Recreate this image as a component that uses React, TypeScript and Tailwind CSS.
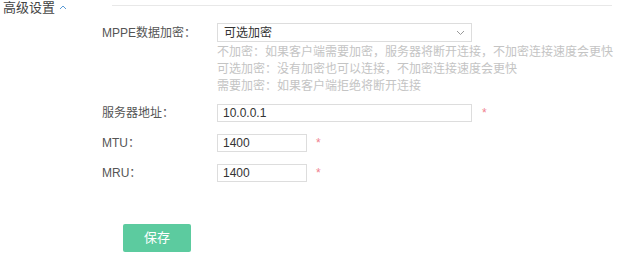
import React from "react";

const font = { fontFamily: '"Liberation Sans", "Noto Sans CJK SC", sans-serif' };

function Row({ label, children, className = "" }: { label: string; children: React.ReactNode; className?: string }) {
  return (
    <div className={`flex items-center ${className}`}>
      <div className="w-[115px] shrink-0 text-[12px] text-[#555]">{label}</div>
      {children}
    </div>
  );
}

function Star({ className = "" }: { className?: string }) {
  return <span className={`text-[12px] text-[#f07f8f] ${className}`}>*</span>;
}

export default function App() {
  return (
    <div className="relative h-[253px] w-[617px] overflow-hidden bg-white" style={font}>
      <div className="flex items-start pl-[3px] pr-[5px] pt-[1px]">
        <span className="text-[13px] leading-[14px] text-[#444]">高级设置</span>
        <svg className="ml-[4px] mt-[3px]" width="8" height="6" viewBox="0 0 8 6">
          <path d="M1 5 L4 2 L7 5" fill="none" stroke="#5b9bd5" strokeWidth="1" />
        </svg>
        <div className="ml-[45px] mt-[4px] h-px flex-1 bg-[#e8e8e8]" />
      </div>

      <div className="pl-[102px]">
        <Row label="MPPE数据加密：" className="mt-[8px]">
          <div className="flex h-[19px] w-[255px] items-center justify-between border border-[#ddd] pl-[6px] pr-[6px] text-[12px] text-[#333]">
            <span>可选加密</span>
            <svg width="9" height="6" viewBox="0 0 9 6">
              <path d="M1 1 L4.5 4.5 L8 1" fill="none" stroke="#999" strokeWidth="1" />
            </svg>
          </div>
        </Row>
        <div className="ml-[115px] mt-[2px] text-[12px] leading-[17px] text-[#c4c4c4]">
          <div>不加密：如果客户端需要加密，服务器将断开连接，不加密连接速度会更快</div>
          <div>可选加密：没有加密也可以连接，不加密连接速度会更快</div>
          <div>需要加密：如果客户端拒绝将断开连接</div>
        </div>

        <Row label="服务器地址：" className="mt-[9px]">
          <div className="flex h-[18px] w-[255px] items-center border border-[#ddd] pl-[5px] text-[12px] text-[#333]">10.0.0.1</div>
          <Star className="ml-[10px]" />
        </Row>
        <Row label="MTU：" className="mt-[12px]">
          <div className="flex h-[18px] w-[90px] items-center border border-[#ddd] pl-[5px] text-[12px] text-[#333]">1400</div>
          <Star className="ml-[9px]" />
        </Row>
        <Row label="MRU：" className="mt-[12px]">
          <div className="flex h-[18px] w-[90px] items-center border border-[#ddd] pl-[5px] text-[12px] text-[#333]">1400</div>
          <Star className="ml-[9px]" />
        </Row>
      </div>

      <div className="ml-[123px] mt-[42px] flex h-[28px] w-[68px] items-center justify-center rounded-[2px] bg-[#5ccb9f] text-[13px] text-white">
        保存
      </div>
    </div>
  );
}
